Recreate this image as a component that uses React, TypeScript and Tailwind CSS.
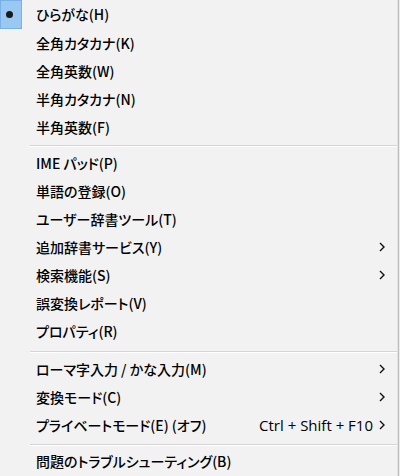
import React from "react";

type Item = {
  label: string;
  sub?: boolean;
  shortcut?: string;
  checked?: boolean;
};

const groups: Item[][] = [
  [
    { label: "ひらがな(H)", checked: true },
    { label: "全角カタカナ(K)" },
    { label: "全角英数(W)" },
    { label: "半角カタカナ(N)" },
    { label: "半角英数(F)" },
  ],
  [
    { label: "IME パッド(P)" },
    { label: "単語の登録(O)" },
    { label: "ユーザー辞書ツール(T)" },
    { label: "追加辞書サービス(Y)", sub: true },
    { label: "検索機能(S)", sub: true },
    { label: "誤変換レポート(V)" },
    { label: "プロパティ(R)" },
  ],
  [
    { label: "ローマ字入力 / かな入力(M)", sub: true },
    { label: "変換モード(C)", sub: true },
    { label: "プライベートモード(E) (オフ)", shortcut: "Ctrl + Shift + F10", sub: true },
  ],
  [{ label: "問題のトラブルシューティング(B)" }],
];

function Chevron() {
  return (
    <svg width="6" height="10" viewBox="0 0 6 10" className="shrink-0">
      <polyline points="1,1 5,5 1,9" fill="none" stroke="#111" strokeWidth="1.4" />
    </svg>
  );
}

function Row({ item, first }: { item: Item; first?: boolean }) {
  return (
    <div className={`flex items-center ${first ? "h-[29px]" : "h-[28px]"}`}>
      <div className="w-[36px] h-full shrink-0 flex items-start">
        {item.checked && (
          <div className="w-[22px] h-[29px] bg-[#99c9f3] border border-[#79b1e6] flex items-center justify-center">
            <div className="w-[7px] h-[7px] rounded-full bg-[#1a1a1a] -ml-[4px]" />
          </div>
        )}
      </div>
      <span className="flex-1 text-[14px] text-black font-medium whitespace-nowrap [font-feature-settings:'palt']">
        {item.label}
      </span>
      {item.shortcut && (
        <span
          className="text-[15px] text-black mr-[6px] whitespace-nowrap"
          style={{ fontFamily: "'Open Sans', 'Noto Sans', sans-serif" }}
        >
          {item.shortcut}
        </span>
      )}
      <div className="w-[18px] shrink-0 flex justify-start">{item.sub && <Chevron />}</div>
    </div>
  );
}

function Separator({ h, top }: { h: string; top: string }) {
  return (
    <div className={`${h} pl-[30px]`}>
      <div className={`${top} border-t border-[#d5d5d5] border-b border-b-white`} />
    </div>
  );
}

export default function App() {
  return (
    <div
      className="w-[400px] h-[476px] bg-[#f2f2f2] overflow-hidden flex"
      style={{ fontFamily: "'Noto Sans CJK JP', 'Noto Sans', sans-serif" }}
    >
      <div className="flex-1 flex flex-col">
        {groups[0].map((it, i) => (
          <Row key={it.label} item={it} first={i === 0} />
        ))}
        <Separator h="h-[8px]" top="mt-[4px]" />
        {groups[1].map((it) => (
          <Row key={it.label} item={it} />
        ))}
        <Separator h="h-[10px]" top="mt-[6px]" />
        {groups[2].map((it) => (
          <Row key={it.label} item={it} />
        ))}
        <Separator h="h-[8px]" top="mt-[5px]" />
        {groups[3].map((it) => (
          <Row key={it.label} item={it} />
        ))}
      </div>
      <div className="w-[3px] h-full flex">
        <div className="w-px bg-[#e4e4e4]" />
        <div className="w-px bg-[#bdbdbd]" />
        <div className="w-px bg-[#ececec]" />
      </div>
    </div>
  );
}
